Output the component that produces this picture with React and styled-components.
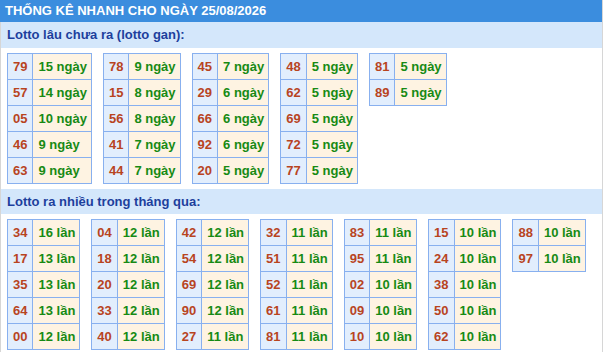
import React from "react";
import styled, { createGlobalStyle } from "styled-components";

const Global = createGlobalStyle`
  body {
    margin: 0;
    background: #fff;
    font-family: "Liberation Sans", Arial, sans-serif;
  }
`;

const Box = styled.div`
  border-left: 1px solid #d6d6d6;
  border-right: 1px solid #d6d6d6;
  min-height: 352px;
`;

const Header = styled.div`
  height: 22px;
  line-height: 22px;
  background: #3b8dde;
  color: #fff;
  font-size: 13px;
  font-weight: bold;
  padding-left: 5px;
  margin-left: -1px;
  white-space: nowrap;
`;

const Bar = styled.div`
  height: ${(p) => p.h}px;
  line-height: ${(p) => p.h}px;
  background: #d4e7fb;
  color: #1d3f9d;
  font-size: 13px;
  font-weight: bold;
  padding-left: 6px;
`;

const Tables = styled.div`
  display: flex;
  flex-wrap: wrap;
  align-items: flex-start;
  gap: 11px;
  padding: 5px 6px;
`;

const Grid = styled.div`
  display: grid;
  grid-template-columns: auto auto;
  border-top: 1px solid #88b0ef;
  border-left: 1px solid #88b0ef;
`;

const Cell = styled.div`
  height: 25px;
  line-height: 25px;
  padding: ${(p) => (p.num ? "0 5px" : "0 4px 0 5px")};
  text-align: ${(p) => (p.num ? "center" : "left")};
  font-size: 13px;
  font-weight: bold;
  white-space: nowrap;
  border-right: 1px solid #88b0ef;
  border-bottom: 1px solid #88b0ef;
  background: ${(p) => (p.num ? "#e2eefd" : "#fef3e2")};
  color: ${(p) => (p.num ? "#b8441f" : "#178a14")};
`;

const gan = [
  [["79", 15], ["57", 14], ["05", 10], ["46", 9], ["63", 9]],
  [["78", 9], ["15", 8], ["56", 8], ["41", 7], ["44", 7]],
  [["45", 7], ["29", 6], ["66", 6], ["92", 6], ["20", 5]],
  [["48", 5], ["62", 5], ["69", 5], ["72", 5], ["77", 5]],
  [["81", 5], ["89", 5]],
];

const nhieu = [
  [["34", 16], ["17", 13], ["35", 13], ["64", 13], ["00", 12]],
  [["04", 12], ["18", 12], ["20", 12], ["33", 12], ["40", 12]],
  [["42", 12], ["54", 12], ["69", 12], ["90", 12], ["27", 11]],
  [["32", 11], ["51", 11], ["52", 11], ["61", 11], ["81", 11]],
  [["83", 11], ["95", 11], ["02", 10], ["09", 10], ["10", 10]],
  [["15", 10], ["24", 10], ["38", 10], ["50", 10], ["62", 10]],
  [["88", 10], ["97", 10]],
];

const StatTables = ({ data, unit }) => (
  <Tables>
    {data.map((group, i) => (
      <Grid key={i}>
        {group.map(([n, c]) => (
          <React.Fragment key={n}>
            <Cell num>{n}</Cell>
            <Cell>
              {c} {unit}
            </Cell>
          </React.Fragment>
        ))}
      </Grid>
    ))}
  </Tables>
);

export default function App() {
  return (
    <>
      <Global />
      <Box>
        <Header>THỐNG KÊ NHANH CHO NGÀY 25/08/2026</Header>
        <Bar h={26}>Lotto lâu chưa ra (lotto gan):</Bar>
        <StatTables data={gan} unit="ngày" />
        <Bar h={25}>Lotto ra nhiều trong tháng qua:</Bar>
        <StatTables data={nhieu} unit="lần" />
      </Box>
    </>
  );
}
